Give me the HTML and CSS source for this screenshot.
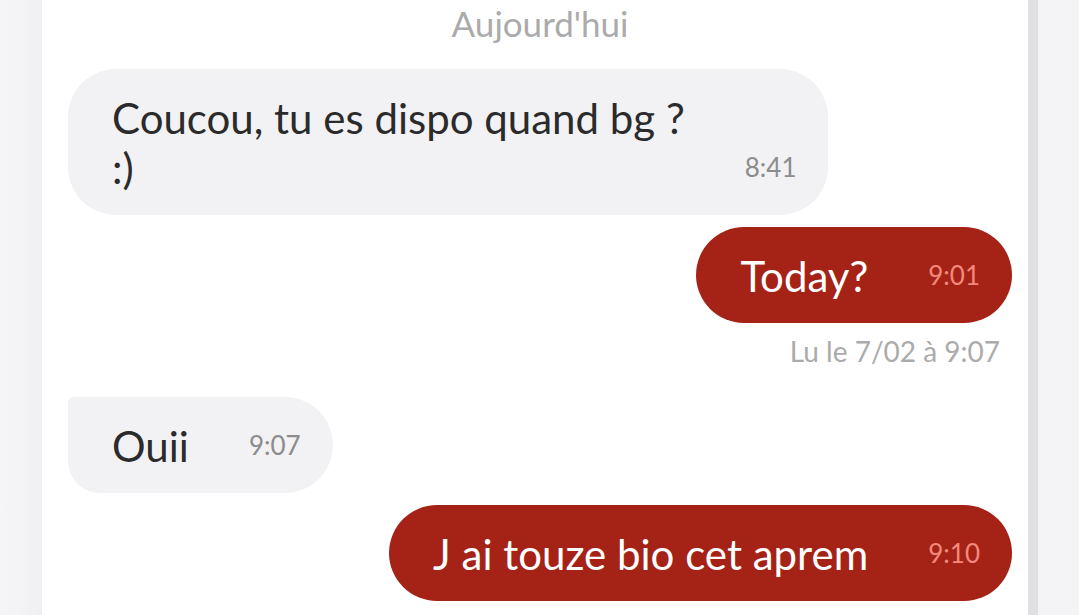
FILE: index.html
```html
<!DOCTYPE html>
<html lang="fr">
<head>
    <meta charset="UTF-8">
    <meta name="viewport" content="width=device-width, initial-scale=1.0">
    <title>Conversation</title>
    <link rel="stylesheet" href="styles.css">
</head>
<body>
    <div class="screen">
        <div class="chat">
            <div class="day">Aujourd'hui</div>

            <div class="msg in">
                <div class="text">Coucou, tu es dispo quand bg ?<br>:)</div>
                <span class="time">8:41</span>
            </div>

            <div class="msg out">
                <div class="text">Today?</div>
                <span class="time">9:01</span>
            </div>
            <div class="read">Lu le 7/02 à 9:07</div>

            <div class="msg in follow">
                <div class="text">Ouii</div>
                <span class="time">9:07</span>
            </div>

            <div class="msg out">
                <div class="text">J ai touze bio cet aprem</div>
                <span class="time">9:10</span>
            </div>
        </div>
        <div class="side"></div>
    </div>
</body>
</html>
```

FILE: styles.css
```css
* {
    box-sizing: border-box;
}
html, body {
    margin: 0;
    padding: 0;
}
body {
    font-family: "Lato", "Liberation Sans", sans-serif;
    background: linear-gradient(to right, #f6f6f8, #f0f0f2 42px, #f0f0f2);
    height: 615px;
    overflow: hidden;
}
.screen {
    display: flex;
    height: 615px;
    padding-left: 42px;
}
.chat {
    width: 986px;
    flex-shrink: 0;
    background: #fff;
    padding: 0 16px 0 26px;
    display: flex;
    flex-direction: column;
    align-items: flex-start;
}
.side {
    flex: 1;
    border-left: 10px solid #e0e0e2;
    background: #f4f4f6;
}
.day {
    align-self: stretch;
    text-align: center;
    color: #ababab;
    font-size: 35px;
    line-height: 46px;
    margin-bottom: 23px;
}
.msg {
    display: flex;
    align-items: flex-end;
    padding: 23px 32px 23px 44px;
    border-radius: 48px;
    font-size: 42px;
    line-height: 50px;
    margin-bottom: 12px;
}
.msg .text {
    position: relative;
    top: 1px;
}
.msg .time {
    margin-left: 60px;
    font-size: 26px;
    line-height: 50px;
}
.in {
    background: #f2f2f4;
    color: #2b2b2b;
}
.in .time {
    color: #8c8c8c;
}
.out {
    align-self: flex-end;
    background: #a52217;
    color: #fff;
}
.out .time {
    color: #f2897c;
}
.follow {
    border-radius: 6px 48px 48px 32px;
}
.read {
    align-self: flex-end;
    margin: -4px 12px 26px 0;
    color: #ababab;
    font-size: 28px;
    line-height: 40px;
}
```
